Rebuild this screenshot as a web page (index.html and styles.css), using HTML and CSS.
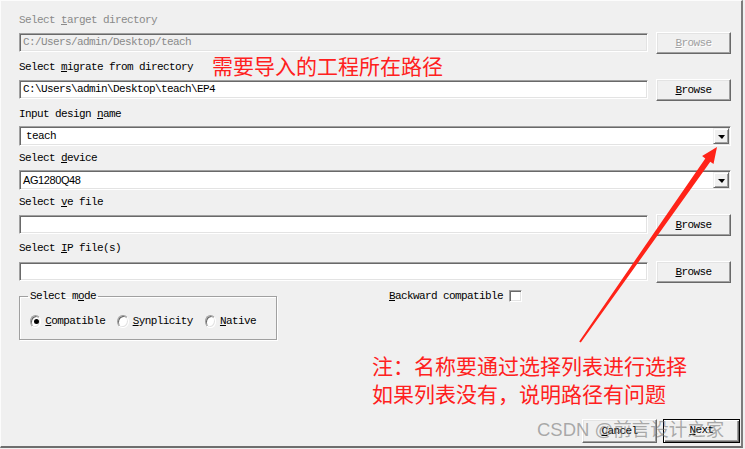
FILE: index.html
```html
<!DOCTYPE html>
<html>
<head>
<meta charset="utf-8">
<link rel="stylesheet" href="styles.css">
</head>
<body>
<div class="window">
  <div class="label disabled"><span>Select <u>t</u>arget directory</span></div>
  <div class="row mt6">
    <div class="field field-disabled">C:/Users/admin/Desktop/teach</div>
    <div class="btn btn-disabled"><u>B</u>rowse</div>
  </div>

  <div class="label mt7"><span>Select <u>m</u>igrate from directory</span><span class="note">需要导入的工程所在路径</span></div>
  <div class="row mt6">
    <div class="field">C:\Users\admin\Desktop\teach\EP4</div>
    <div class="btn"><u>B</u>rowse</div>
  </div>

  <div class="label mt7"><span>Input design <u>n</u>ame</span></div>
  <div class="combo mt6">
    <span class="combo-text">teach</span>
    <span class="drop"><span class="tri"></span></span>
  </div>

  <div class="label mt6"><span>Select <u>d</u>evice</span></div>
  <div class="combo mt6">
    <span class="combo-text device">AG1280Q48</span>
    <span class="drop"><span class="tri"></span></span>
  </div>

  <div class="label mt6"><span>Select <u>v</u>e file</span></div>
  <div class="row mt6">
    <div class="field"></div>
    <div class="btn"><u>B</u>rowse</div>
  </div>

  <div class="label mt6"><span>Select <u>I</u>P file(s)</span></div>
  <div class="row mt7">
    <div class="field"></div>
    <div class="btn"><u>B</u>rowse</div>
  </div>

  <div class="bottom mt7">
    <fieldset class="group">
      <legend class="legend">Select m<u>o</u>de</legend>
      <div class="radios">
        <span class="radio checked"></span><span class="rlabel"><u>C</u>ompatible</span>
        <span class="radio"></span><span class="rlabel"><u>S</u>ynplicity</span>
        <span class="radio"></span><span class="rlabel"><u>N</u>ative</span>
      </div>
    </fieldset>
    <div class="backward">
      <span class="blabel"><u>B</u>ackward compatible</span>
      <span class="check"></span>
    </div>
  </div>

  <div class="footer">
    <div class="btn btn-cancel"><u>C</u>ancel</div>
    <div class="btn btn-default"><u>N</u>ext</div>
  </div>

  <svg class="arrow" width="745" height="449" viewBox="0 0 745 449">
    <polygon points="579.2,341.4 705.3,158.4 702.1,156.1 717,147 713.5,164.1 710.3,161.8 580.8,342.6" fill="#ff2318"/>
  </svg>

  <div class="annotation">注：名称要通过选择列表进行选择<br>如果列表没有，说明路径有问题</div>
  <div class="watermark">CSDN @前言设计之家</div>
</div>
</body>
</html>
```

FILE: styles.css
```css
html, body {
  margin: 0;
  padding: 0;
  background: #f0f0f0;
}

.window {
  position: relative;
  box-sizing: border-box;
  width: 743px;
  height: 448px;
  border-left: 1px solid #fcfcfc;
  border-top: 1px solid #fcfcfc;
  border-right: 2px solid #7c7c7c;
  border-bottom: 2px solid #6e6e6e;
  padding: 13px 10px 3px 18px;
  display: flex;
  flex-direction: column;
  background: #f0f0f0;
  font-family: "Liberation Mono", "DejaVu Sans Mono", monospace;
  font-size: 11px;
  letter-spacing: -0.6px;
  color: #000;
}

.mt6 { margin-top: 6px; }
.mt7 { margin-top: 7px; }

.label {
  height: 12px;
  line-height: 12px;
  white-space: nowrap;
  display: flex;
  align-items: center;
}

.disabled { color: #8a8a8a; }

.note {
  margin-left: 19px;
  margin-top: -4px;
  font-family: "Noto Sans CJK SC", sans-serif;
  font-size: 21px;
  letter-spacing: 0;
  line-height: 12px;
  color: #ff2020;
}

.row {
  display: flex;
  align-items: flex-start;
  gap: 8px;
  height: 22px;
}

.field {
  flex: 1;
  box-sizing: border-box;
  height: 19px;
  margin-top: 1px;
  padding-left: 3px;
  line-height: 17px;
  background: #fff;
  border: 1px solid;
  border-color: #a0a0a0 #fff #fff #a0a0a0;
  box-shadow: inset 1px 1px 0 #696969, inset -1px -1px 0 #e3e3e3;
  white-space: nowrap;
}

.field-disabled {
  background: #f0f0f0;
  color: #8a8a8a;
}

.btn {
  box-sizing: border-box;
  width: 75px;
  height: 22px;
  line-height: 20px;
  text-align: center;
  background: #f0f0f0;
  border: 1px solid;
  border-color: #fff #696969 #696969 #fff;
  box-shadow: inset -1px -1px 0 #a0a0a0, inset 1px 1px 0 #e3e3e3;
}

.btn-disabled {
  color: #a0a0a0;
  text-shadow: 1px 1px 0 #fff;
}

.combo {
  box-sizing: border-box;
  height: 20px;
  display: flex;
  align-items: center;
  background: #fff;
  border: 1px solid;
  border-color: #a0a0a0 #fff #fff #a0a0a0;
  box-shadow: inset 1px 1px 0 #696969, inset -1px -1px 0 #e3e3e3;
  padding: 1px;
}

.combo-text {
  flex: 1;
  padding-left: 5px;
  line-height: 16px;
  white-space: nowrap;
}

.device {
  padding-left: 2px;
  font-family: "Liberation Sans", Arial, sans-serif;
  font-size: 11px;
  letter-spacing: -0.4px;
}

.drop {
  box-sizing: border-box;
  width: 16px;
  height: 16px;
  display: flex;
  align-items: center;
  justify-content: center;
  background: #f0f0f0;
  border: 1px solid;
  border-color: #f0f0f0 #696969 #696969 #f0f0f0;
  box-shadow: inset 1px 1px 0 #fff, inset -1px -1px 0 #a0a0a0;
}

.tri {
  width: 0;
  height: 0;
  border-left: 4px solid transparent;
  border-right: 3px solid transparent;
  border-top: 4px solid #000;
  margin-top: 1px;
}

.bottom {
  display: flex;
  align-items: flex-start;
}

.group {
  box-sizing: border-box;
  width: 258px;
  height: 50px;
  margin: 0;
  padding: 0 8px;
  border: 1px solid #a0a0a0;
  box-shadow: 1px 1px 0 #fff, inset 1px 1px 0 #fff;
  min-width: 0;
}

.legend {
  padding: 0 2px;
  line-height: 12px;
  height: 12px;
}

.radios {
  display: flex;
  align-items: center;
  height: 14px;
  margin-top: 12px;
  margin-left: 2px;
}

.radio {
  position: relative;
  box-sizing: border-box;
  width: 13px;
  height: 13px;
  border-radius: 50%;
  background: #fff;
  border: 1px solid;
  border-color: #a0a0a0 #fff #fff #a0a0a0;
  box-shadow: inset 1px 1px 0 #696969, inset -1px -1px 0 #e3e3e3;
  margin-right: 4px;
}

.radio.checked::after {
  content: "";
  position: absolute;
  left: 3px;
  top: 3px;
  width: 5px;
  height: 5px;
  border-radius: 50%;
  background: #000;
}

.rlabel {
  margin-right: 12px;
  line-height: 14px;
}

.backward {
  display: flex;
  align-items: center;
  margin-left: 112px;
  height: 12px;
}

.blabel {
  line-height: 12px;
}

.check {
  box-sizing: border-box;
  width: 13px;
  height: 12px;
  margin-left: 6px;
  background: #fff;
  border: 1px solid;
  border-color: #a0a0a0 #fff #fff #a0a0a0;
  box-shadow: inset 1px 1px 0 #696969, inset -1px -1px 0 #e3e3e3;
}

.footer {
  margin-top: auto;
  margin-right: -9px;
  display: flex;
  justify-content: flex-end;
  gap: 6px;
}

.btn-cancel {
  width: 75px;
  height: 24px;
  line-height: 22px;
}

.btn-default {
  width: 77px;
  height: 24px;
  line-height: 20px;
  border: 1px solid #000;
  box-shadow: inset 1px 1px 0 #fff, inset -1px -1px 0 #696969, inset -2px -2px 0 #a0a0a0;
}

.arrow {
  position: absolute;
  left: -1px;
  top: -1px;
  pointer-events: none;
}

.annotation {
  position: absolute;
  left: 371px;
  top: 350px;
  font-family: "Noto Sans CJK SC", sans-serif;
  font-size: 21px;
  line-height: 28px;
  letter-spacing: 0;
  color: #ff2020;
  white-space: nowrap;
}

.watermark {
  position: absolute;
  left: 536px;
  top: 416px;
  font-family: "Liberation Sans", "Noto Sans CJK SC", sans-serif;
  font-size: 18.5px;
  line-height: 26px;
  letter-spacing: 0;
  color: rgba(120, 120, 120, 0.6);
  white-space: nowrap;
}
```
